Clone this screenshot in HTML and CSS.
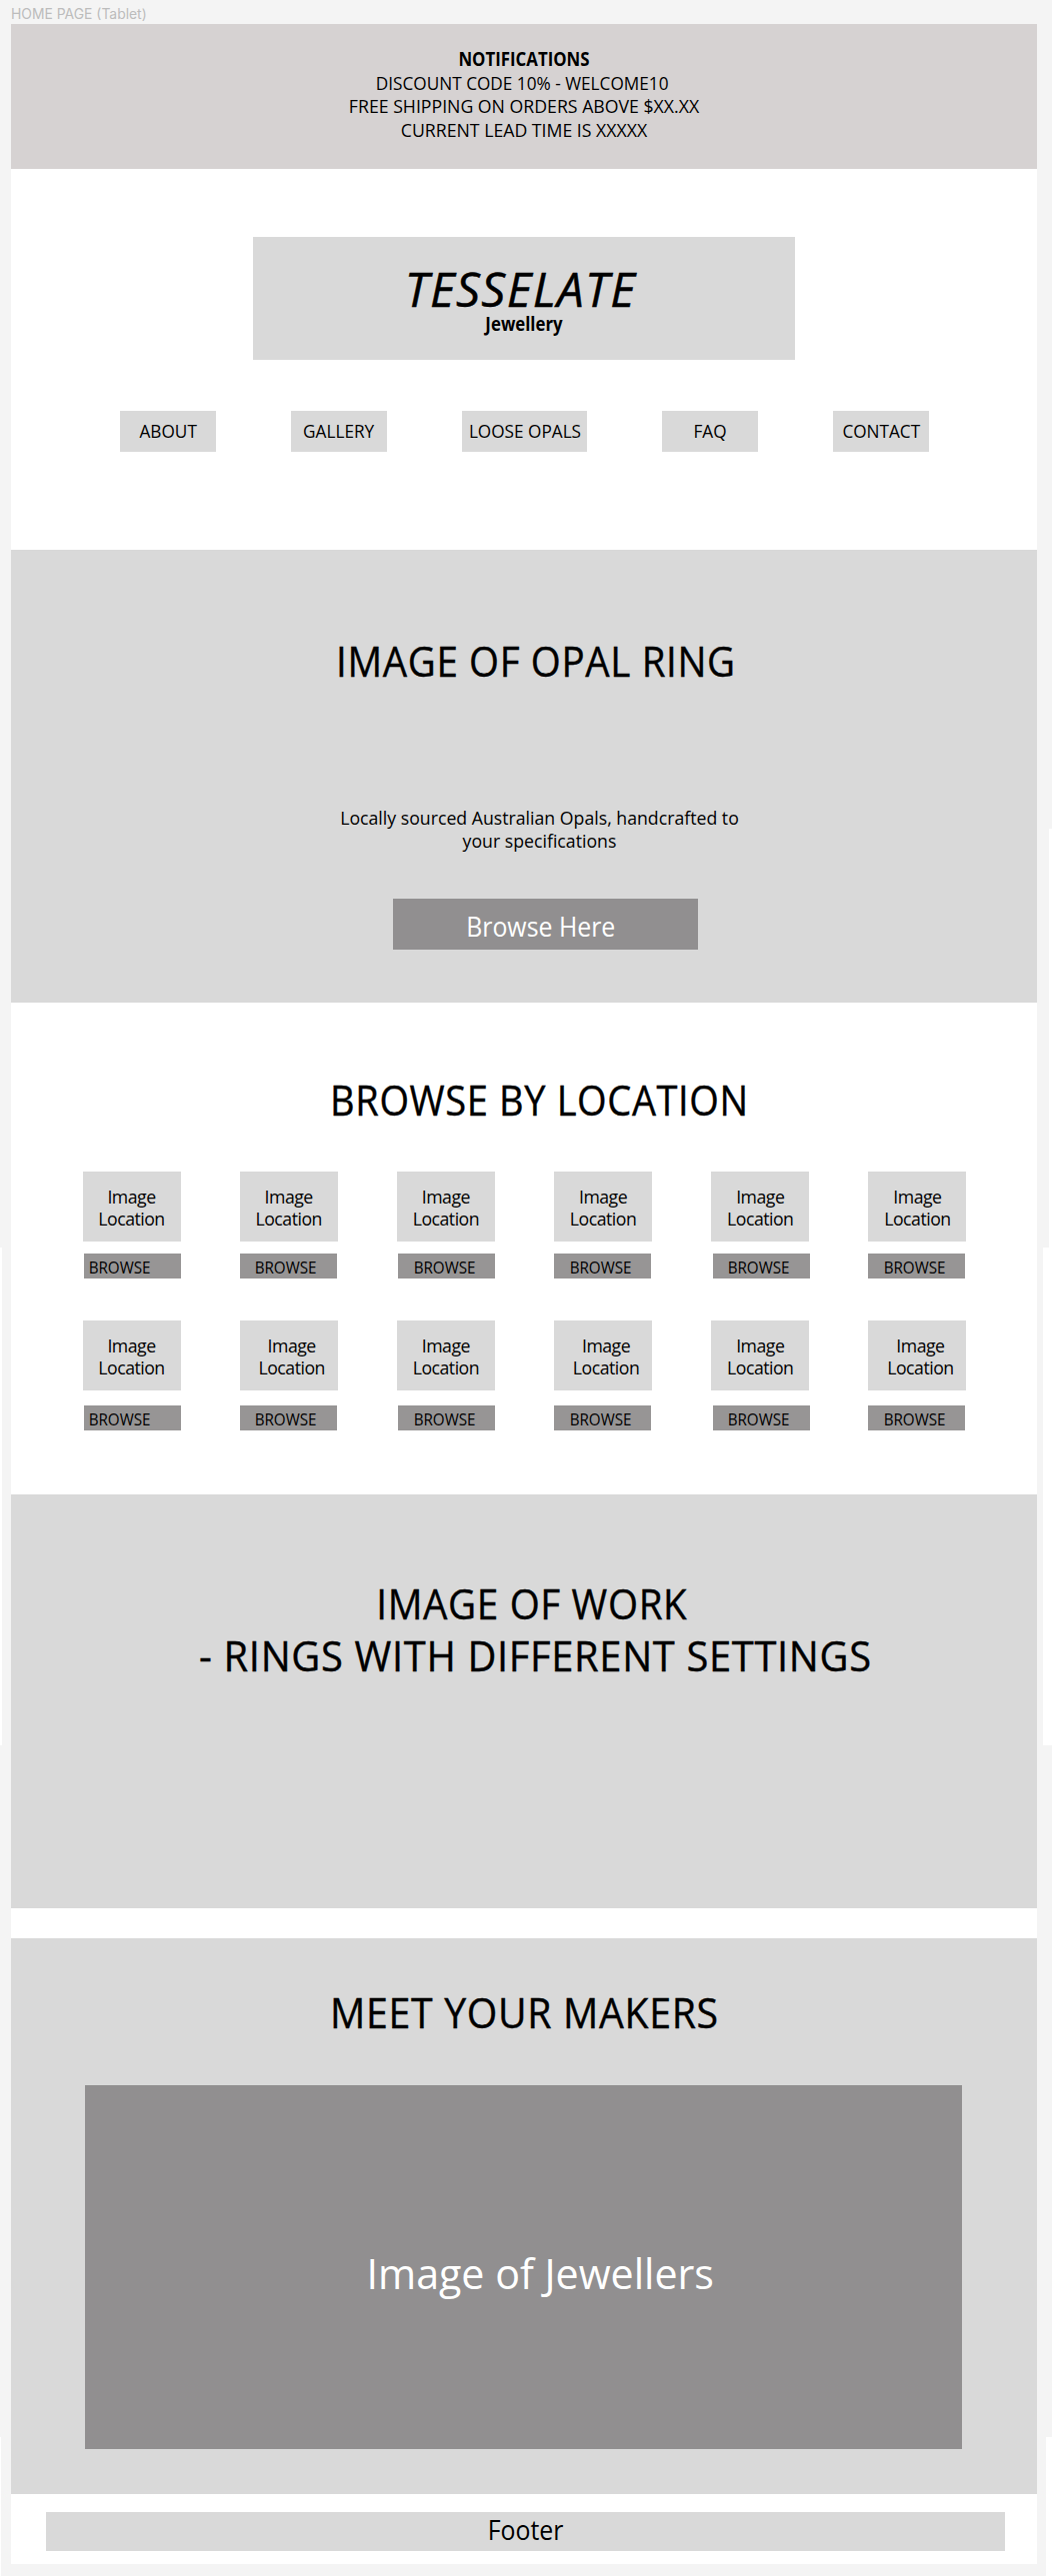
FILE: index.html
```html
<!DOCTYPE html>
<html lang="en">
<head>
<meta charset="utf-8">
<title>Tesselate Jewellery</title>
<link rel="stylesheet" href="styles.css">
</head>
<body>
<div class="frame-label">HOME PAGE (Tablet)</div>
<div class="frame">
  <section class="notice">
    <p class="text bold">NOTIFICATIONS</p>
    <p class="text discount">DISCOUNT CODE 10% - WELCOME10</p>
    <p class="text">FREE SHIPPING ON ORDERS ABOVE $XX.XX</p>
    <p class="text">CURRENT LEAD TIME IS XXXXX</p>
  </section>
  <header class="header">
    <div class="logo">
      <h1 class="brand">TESSELATE</h1>
      <p class="text bold">Jewellery</p>
    </div>
    <nav class="nav">
      <a class="nav-item"><span class="text">ABOUT</span></a>
      <a class="nav-item"><span class="text">GALLERY</span></a>
      <a class="nav-item wide"><span class="text">LOOSE OPALS</span></a>
      <a class="nav-item"><span class="text">FAQ</span></a>
      <a class="nav-item"><span class="text">CONTACT</span></a>
    </nav>
  </header>
  <section class="hero">
    <h2 class="title">IMAGE OF OPAL RING</h2>
    <p class="text lead">Locally sourced Australian Opals, handcrafted to<br>your specifications</p>
    <a class="button"><span class="label">Browse Here</span></a>
  </section>
  <section class="locations">
    <h2 class="title">BROWSE BY LOCATION</h2>
    <div class="grid">
      <div class="card"><div class="tile">Image<br>Location</div><a class="browse inset left"><span>BROWSE</span></a></div>
      <div class="card"><div class="tile">Image<br>Location</div><a class="browse"><span>BROWSE</span></a></div>
      <div class="card"><div class="tile">Image<br>Location</div><a class="browse inset"><span>BROWSE</span></a></div>
      <div class="card"><div class="tile">Image<br>Location</div><a class="browse"><span>BROWSE</span></a></div>
      <div class="card"><div class="tile">Image<br>Location</div><a class="browse inset"><span>BROWSE</span></a></div>
      <div class="card"><div class="tile">Image<br>Location</div><a class="browse"><span>BROWSE</span></a></div>
    </div>
    <div class="grid second">
      <div class="card"><div class="tile">Image<br>Location</div><a class="browse inset left"><span>BROWSE</span></a></div>
      <div class="card"><div class="tile shift">Image<br>Location</div><a class="browse"><span>BROWSE</span></a></div>
      <div class="card"><div class="tile">Image<br>Location</div><a class="browse inset"><span>BROWSE</span></a></div>
      <div class="card"><div class="tile shift">Image<br>Location</div><a class="browse"><span>BROWSE</span></a></div>
      <div class="card"><div class="tile">Image<br>Location</div><a class="browse inset"><span>BROWSE</span></a></div>
      <div class="card"><div class="tile shift">Image<br>Location</div><a class="browse"><span>BROWSE</span></a></div>
    </div>
  </section>
  <section class="work">
    <h2 class="title first">IMAGE OF WORK</h2>
    <h2 class="title">- RINGS WITH DIFFERENT SETTINGS</h2>
  </section>
  <section class="makers">
    <h2 class="title">MEET YOUR MAKERS</h2>
    <div class="photo"><span class="caption">Image of Jewellers</span></div>
  </section>
  <footer class="footer"><span class="label">Footer</span></footer>
</div>
</body>
</html>
```
FILE: styles.css
```css
* { box-sizing: border-box; }

/* Canvas, with slivers of the neighbouring frames at both edges */
body {
  margin: 0;
  height: 2577px;
  overflow: hidden;
  padding: 6px 15px 0 11px;
  color: #000;
  font-family: "Open Sans", "Noto Sans", sans-serif;
  background:
    linear-gradient(#fff, #fff) 1049px 829px / 3px 419px no-repeat,
    linear-gradient(#fff, #fff) 1043px 1248px / 9px 498px no-repeat,
    linear-gradient(#fff, #fff) 1046px 2438px / 6px 139px no-repeat,
    linear-gradient(#fff, #fff) 0 1248px / 2px 498px no-repeat,
    linear-gradient(#fff, #fff) 0 2438px / 1px 139px no-repeat,
    #f4f4f4;
}

h1, h2, p { margin: 0; font-weight: 400; }

.frame-label {
  height: 18px;
  font: 13.9px/17px Inter, sans-serif;
  color: #bcbcbc;
}

.frame {
  display: flex;
  flex-direction: column;
  height: 2541px;
  background: #fff;
}

/* Narrowed lettering shared by all copy */
.text, .brand, .title, .label, .tile, .browse span, .caption {
  white-space: nowrap;
  text-align: center;
}
.text { font-size: 18.7px; line-height: 23.5px; transform: scaleX(.947); }
.bold { font-weight: 700; transform: scaleX(.9); }
.discount { padding-right: 4px; transform: scaleX(.92); }
.title {
  font-size: 42px;
  line-height: 52.3px;
  letter-spacing: .7px;
  -webkit-text-stroke: .4px currentColor;
}
.label { font-size: 26.6px; line-height: 36px; transform: scaleX(.935); }

.notice { height: 145px; padding-top: 23px; background: #d6d2d2; }

.header {
  height: 381px;
  padding-top: 68px;
  display: flex;
  flex-direction: column;
  align-items: center;
}
.logo { width: 542px; height: 123px; padding-top: 29px; background: #d9d9d9; }
.brand {
  font-size: 47.6px;
  line-height: 46px;
  font-style: italic;
  letter-spacing: 1.4px;
  padding-right: 7px;
  -webkit-text-stroke: .5px currentColor;
}
.nav { display: flex; gap: 74.5px; margin: 50.5px 0 0 1px; }
.nav-item {
  display: flex;
  justify-content: center;
  align-items: center;
  width: 96.5px;
  height: 41.5px;
  padding-bottom: 1.5px;
  background: #d9d9d9;
}
.nav-item .text { transform: scaleX(.92); }
.nav-item.wide { width: 125.5px; }

.hero {
  height: 453px;
  padding-top: 84.5px;
  background: #d9d9d9;
  display: flex;
  flex-direction: column;
  align-items: center;
}
.hero .title { margin-left: 24px; transform: scaleX(.917); }
.lead { margin: 119px 0 46px 30px; }
.button {
  display: flex;
  justify-content: center;
  width: 305px;
  height: 51.5px;
  margin-left: 43px;
  padding: 10px 10px 0 0;
  background: #918f90;
  color: #fff;
}

.locations { height: 492px; padding: 70.5px 70.5px 0 71.5px; }
.locations .title { padding-left: 32px; transform: scaleX(.905); }
.grid {
  display: grid;
  grid-template-columns: repeat(6, 98px);
  justify-content: space-between;
  margin-top: 46px;
}
.grid.second { margin-top: 41.5px; }
.tile {
  height: 70px;
  padding-top: 14px;
  background: #d9d9d9;
  font-size: 17.7px;
  line-height: 22px;
  letter-spacing: -.5px;
}
.tile.shift { padding-left: 6px; }
.browse {
  display: flex;
  justify-content: center;
  width: 97px;
  height: 25.5px;
  margin-top: 12px;
  padding: 3px 5px 0 0;
  background: #979595;
}
.second .browse { margin-top: 15px; }
.browse.inset { margin-left: 1.3px; }
.browse.left { justify-content: flex-start; padding-left: 3px; }
.browse span { font-size: 16px; line-height: 22px; transform: scaleX(.95); }

.work { height: 414px; padding-top: 83px; background: #d9d9d9; }
.work .title { padding-left: 24px; transform: scaleX(.949); }
.work .first { padding-left: 17px; transform: scaleX(.92); }

.makers { height: 556px; margin-top: 30px; padding: 48px 75px 0 74px; background: #d9d9d9; }
.makers .title { padding-left: 2px; transform: scaleX(.935); }
.photo {
  display: flex;
  justify-content: center;
  height: 364.5px;
  margin-top: 46.5px;
  padding: 162px 0 0 33px;
  background: #918f90;
  color: #fff;
}
.caption { font-size: 42px; line-height: 52.3px; transform: scaleX(.98); }

.footer {
  height: 38.5px;
  margin: 18px 32px 0 34.5px;
  background: #d9d9d9;
  display: flex;
  justify-content: center;
}
```
